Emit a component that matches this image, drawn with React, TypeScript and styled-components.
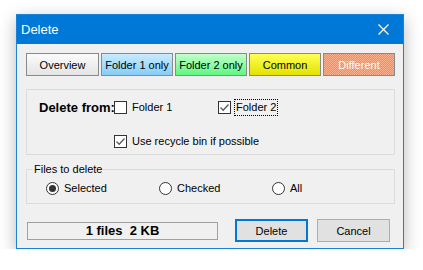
import styled, { createGlobalStyle } from "styled-components"

const GlobalStyle = createGlobalStyle`
    body {
        margin: 0;
        background: #ffffff;
        font-family: "Liberation Sans", Arial, sans-serif;
        font-size: 11px;
        color: #000;
    }
`

type TabKind = 'overview' | 'left' | 'right' | 'common' | 'diff'

const tabs: { label: string, kind: TabKind }[] = [
    { label: 'Overview', kind: 'overview' },
    { label: 'Folder 1 only', kind: 'left' },
    { label: 'Folder 2 only', kind: 'right' },
    { label: 'Common', kind: 'common' },
    { label: 'Different', kind: 'diff' },
]

const tabBackgrounds: Record<TabKind, string> = {
    overview: 'linear-gradient(#fbfbfb, #e4e4e4)',
    left: 'linear-gradient(#c9ebff, #86cdf7)',
    right: 'linear-gradient(#c2ffcb, #5ff77f)',
    common: 'linear-gradient(#ffff55, #e2e200)',
    diff: 'repeating-conic-gradient(#f7895a 0 25%, #fbb08e 0 50%) 0 0 / 2px 2px',
}

const CheckMark = () => (
    <svg width="11" height="11" viewBox="0 0 11 11">
        <path d="M1.5 5.5 L4.2 8.2 L9.5 2.5" fill="none" stroke="#5a5a5a" strokeWidth="1.3" />
    </svg>
)

const Check = ({ checked, label, focused }: { checked?: boolean, label: string, focused?: boolean }) => (
    <CheckItem>
        <Box>{checked && <CheckMark />}</Box>
        <CheckLabel $focused={focused}>{label}</CheckLabel>
    </CheckItem>
)

const Radio = ({ checked, label }: { checked?: boolean, label: string }) => (
    <CheckItem>
        <RadioCircle>{checked && <RadioDot />}</RadioCircle>
        <CheckLabel>{label}</CheckLabel>
    </CheckItem>
)

const App = () => {
    return (
        <Page>
            <GlobalStyle />
            <Window>
                <TitleBar>
                    <Title>Delete</Title>
                    <svg width="11" height="11" viewBox="0 0 11 11">
                        <path d="M0.5 0.5 L10.5 10.5 M10.5 0.5 L0.5 10.5" stroke="#fff" strokeWidth="1.2" />
                    </svg>
                </TitleBar>
                <Body>
                    <TabRow>
                        {tabs.map(t => <Tab key={t.kind} $kind={t.kind}>{t.label}</Tab>)}
                    </TabRow>
                    <Group>
                        <FromRow>
                            <FromLabel>Delete from:</FromLabel>
                            <FolderSlot><Check label="Folder 1" /></FolderSlot>
                            <Check checked focused label="Folder 2" />
                        </FromRow>
                        <RecycleRow>
                            <Check checked label="Use recycle bin if possible" />
                        </RecycleRow>
                    </Group>
                    <FileGroup>
                        <Legend>Files to delete</Legend>
                        <RadioRow>
                            <Radio checked label="Selected" />
                            <Radio label="Checked" />
                            <Radio label="All" />
                        </RadioRow>
                    </FileGroup>
                    <Footer>
                        <Status>1 files&nbsp;&nbsp;2 KB</Status>
                        <Button $primary>Delete</Button>
                        <Button>Cancel</Button>
                    </Footer>
                </Body>
            </Window>
        </Page>
    )
}

const Page = styled.div`
    padding: 14px 0 0 16px;
`

const Window = styled.div`
    width: 388px;
    height: 235px;
    box-sizing: border-box;
    border: 1px solid #1883d7;
    background: #f0f0f0;
    box-shadow: 0 5px 16px rgba(0, 0, 0, 0.28);
    display: flex;
    flex-direction: column;
`

const TitleBar = styled.div`
    height: 29px;
    flex: none;
    background: #0078d7;
    color: #fff;
    display: flex;
    align-items: center;
    justify-content: space-between;
    padding: 0 14px 0 4px;
`

const Title = styled.span`
    font-size: 13px;
`

const Body = styled.div`
    padding: 9px 9px 0 9px;
`

const TabRow = styled.div`
    display: grid;
    grid-template-columns: 73px 72px 72px 72px 72px;
    column-gap: 2px;
`

const Tab = styled.div<{ $kind: TabKind }>`
    height: 23px;
    box-sizing: border-box;
    border: 1px solid #8a8a8a;
    background: ${p => tabBackgrounds[p.$kind]};
    color: ${p => p.$kind === 'diff' ? '#ffffff' : '#000'};
    display: flex;
    align-items: center;
    justify-content: center;
    font-size: 11px;
    white-space: nowrap;
`

const Group = styled.div`
    margin-top: 13px;
    width: 369px;
    height: 66px;
    box-sizing: border-box;
    border: 1px solid #dcdcdc;
    padding: 9px 0 0 12px;
`

const FromRow = styled.div`
    display: flex;
    align-items: center;
    height: 16px;
`

const FromLabel = styled.span`
    width: 75px;
    font-weight: bold;
    font-size: 13px;
    white-space: nowrap;
`

const FolderSlot = styled.div`
    width: 104px;
`

const RecycleRow = styled.div`
    margin-top: 18px;
    padding-left: 75px;
    height: 16px;
`

const CheckItem = styled.div`
    display: flex;
    align-items: center;
    gap: 4px;
    height: 16px;
`

const Box = styled.div`
    width: 13px;
    height: 13px;
    box-sizing: border-box;
    border: 1px solid #333;
    background: #fff;
    display: flex;
    align-items: center;
    justify-content: center;
`

const CheckLabel = styled.span<{ $focused?: boolean }>`
    white-space: nowrap;
    padding: 0 1px;
    outline: ${p => p.$focused ? '1px dotted #000' : 'none'};
    line-height: 15px;
`

const RadioCircle = styled.div`
    width: 13px;
    height: 13px;
    box-sizing: border-box;
    border: 1px solid #333;
    border-radius: 50%;
    background: #fff;
    display: flex;
    align-items: center;
    justify-content: center;
`

const RadioDot = styled.div`
    width: 7px;
    height: 7px;
    border-radius: 50%;
    background: #333;
`

const FileGroup = styled.fieldset`
    margin: 6px 0 0 0;
    width: 369px;
    box-sizing: border-box;
    border: 1px solid #dcdcdc;
    padding: 3px 0 7px 19px;
`

const Legend = styled.legend`
    padding: 0 1px;
    margin-left: -13px;
    line-height: 16px;
`

const RadioRow = styled.div`
    display: grid;
    grid-template-columns: 113px 113px 113px;
`

const Footer = styled.div`
    margin-top: 15px;
    display: flex;
    align-items: center;
`

const Status = styled.div`
    width: 191px;
    height: 18px;
    box-sizing: border-box;
    border: 1px solid #a0a0a0;
    margin-left: 1px;
    display: flex;
    align-items: center;
    justify-content: center;
    font-weight: bold;
    font-size: 13px;
    white-space: pre;
`

const Button = styled.div<{ $primary?: boolean }>`
    width: 73px;
    height: 23px;
    box-sizing: border-box;
    border: ${p => p.$primary ? '2px solid #0078d7' : '1px solid #adadad'};
    background: #e1e1e1;
    display: flex;
    align-items: center;
    justify-content: center;
    margin-left: ${p => p.$primary ? '17px' : '9px'};
`

export default App
